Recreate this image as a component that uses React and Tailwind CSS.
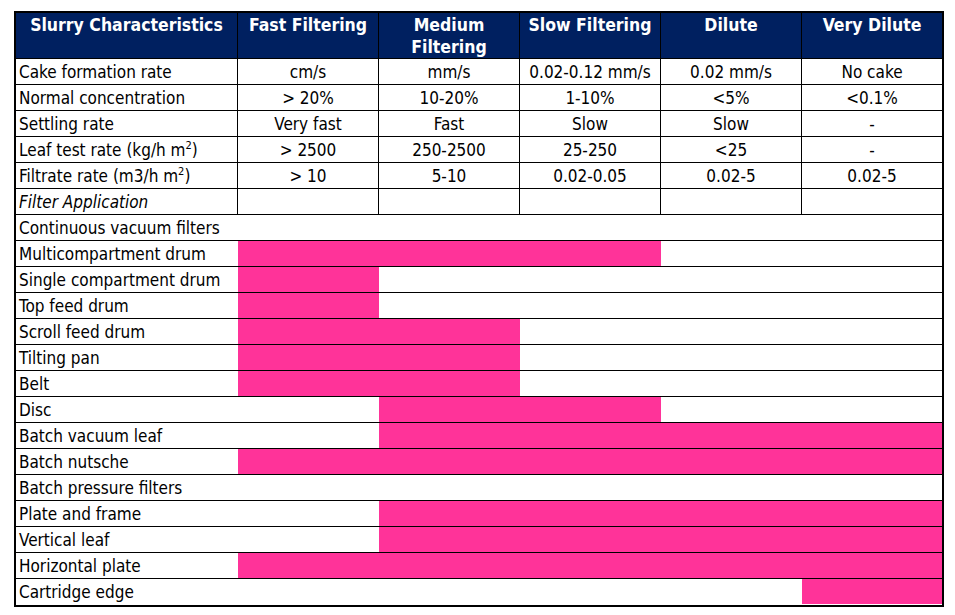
import React from "react";

const PINK = "bg-[#ff3399]";

const Sup = () => <sup className="text-[11px] relative -top-[7px]">2</sup>;

const dataRows = [
  ["Cake formation rate", "cm/s", "mm/s", "0.02-0.12 mm/s", "0.02 mm/s", "No cake"],
  ["Normal concentration", "> 20%", "10-20%", "1-10%", "<5%", "<0.1%"],
  ["Settling rate", "Very fast", "Fast", "Slow", "Slow", "-"],
  [<>Leaf test rate (kg/h m<Sup />)</>, "> 2500", "250-2500", "25-250", "<25", "-"],
  [<>Filtrate rate (m3/h m<Sup />)</>, "> 10", "5-10", "0.02-0.05", "0.02-5", "0.02-5"],
];

const filterRows = [
  ["Continuous vacuum filters", null],
  ["Multicompartment drum", [2, 4]],
  ["Single compartment drum", [2, 2]],
  ["Top feed drum", [2, 2]],
  ["Scroll feed drum", [2, 3]],
  ["Tilting pan", [2, 3]],
  ["Belt", [2, 3]],
  ["Disc", [3, 4]],
  ["Batch vacuum leaf", [3, 6]],
  ["Batch nutsche", [2, 6]],
  ["Batch pressure filters", null],
  ["Plate and frame", [3, 6]],
  ["Vertical leaf", [3, 6]],
  ["Horizontal plate", [2, 6]],
  ["Cartridge edge", [6, 6]],
];

const startCls = { 2: "col-start-2", 3: "col-start-3", 4: "col-start-4", 5: "col-start-5", 6: "col-start-6" };
const endCls = { 2: "col-end-3", 3: "col-end-4", 4: "col-end-5", 5: "col-end-6", 6: "col-end-7" };

const gridCols = "grid grid-cols-[222px_141px_141px_141px_141px_1fr]";

export default function App() {
  const headers = ["Slurry Characteristics", "Fast Filtering", "Medium Filtering", "Slow Filtering", "Dilute", "Very Dilute"];
  return (
    <div
      className="w-[955px] h-[615px] bg-white pt-[11px] pl-[14px] text-black"
      style={{ fontFamily: '"DejaVu Sans Condensed", "DejaVu Sans", Tahoma, sans-serif' }}
    >
      <div className="w-[930px] border-2 border-black text-[17px] leading-[18px]">
        <div className={`${gridCols} h-[46px] bg-[#002060] border-b border-black text-white font-bold text-[17.5px] leading-[22px]`}>
          {headers.map((h, i) => (
            <div
              key={i}
              className={`pt-[1px] text-center ${i < 5 ? "border-r border-black" : ""} ${i === 2 ? "px-8" : "px-1"}`}
            >
              {h}
            </div>
          ))}
        </div>
        {dataRows.map((r, ri) => (
          <div key={ri} className={`${gridCols} h-[26px] border-b border-black`}>
            {r.map((c, i) => (
              <div
                key={i}
                className={`flex items-center h-[25px] ${i === 0 ? "pl-[3px]" : "justify-center"} ${i < 5 ? "border-r border-black" : ""}`}
              >
                <span className="whitespace-nowrap">{c}</span>
              </div>
            ))}
          </div>
        ))}
        <div className={`${gridCols} h-[26px] border-b border-black`}>
          <div className="flex items-center pl-[3px] italic border-r border-black">Filter Application</div>
          <div className="border-r border-black" />
          <div className="border-r border-black" />
          <div className="border-r border-black" />
          <div className="border-r border-black" />
          <div />
        </div>
        {filterRows.map(([label, span], ri) => (
          <div
            key={ri}
            className={`${gridCols} h-[26px] ${ri < filterRows.length - 1 ? "border-b border-black" : ""}`}
          >
            <div className="col-start-1 row-start-1 col-end-7 flex items-center pl-[3px] whitespace-nowrap h-[25px]">
              {label}
            </div>
            {span && (
              <div className={`${startCls[span[0]]} ${endCls[span[1]]} row-start-1 ${PINK} h-[25px]`} />
            )}
          </div>
        ))}
      </div>
    </div>
  );
}
